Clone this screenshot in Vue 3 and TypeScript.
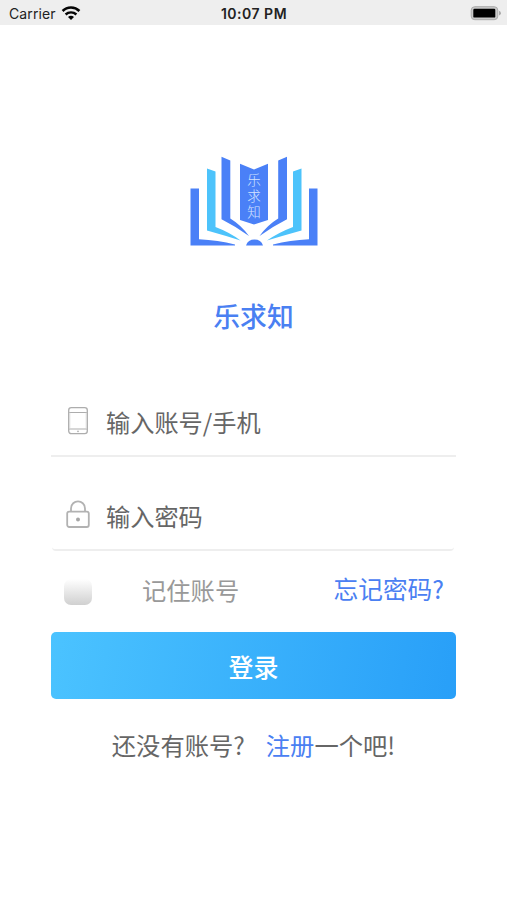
<script setup lang="ts">
import { ref } from 'vue'

const account = ref('')
const password = ref('')
const remember = ref(false)
</script>

<template>
  <div class="screen">
    <header class="status">
      <div class="carrier">
        <span>Carrier</span>
        <svg class="wifi" width="20" height="16" viewBox="0 0 20 16" fill="none">
          <path d="M1.600 5C6.200 .4 13.800 .4 18.400 5" stroke="#050505" stroke-width="2.600" />
          <path d="M4.600 8.500C7.600 5.700 12.400 5.700 15.400 8.500" stroke="#050505" stroke-width="2.400" />
          <path d="M7 10.900C8.800 9.400 11.200 9.400 13 10.900L10 13.900Z" fill="#050505" />
        </svg>
      </div>
      <span class="time">10:07 PM</span>
      <svg class="battery" width="32" height="16" viewBox="0 0 32 16">
        <rect x="1.200" y=".7" width="26.600" height="13" rx="3.600" fill="#c9c9c9" stroke="#aaa" stroke-width="1" />
        <rect x="3.300" y="2.800" width="22" height="8.800" rx="1.200" fill="#000" />
        <path d="M29 4.800Q31 5.700 31 7.200Q31 8.700 29 9.600Z" fill="#aaa" />
      </svg>
    </header>

    <main class="content">
      <svg class="logo" width="130" height="92" viewBox="0 0 130 92">
        <g fill="#4a80f7">
          <path d="M1.500 32.500H10V83.200Q29 84 46 88.500V89.500H1.500Z" />
          <path d="M128.500 32.500H120V83.200Q101 84 84 88.500V89.500H128.500Z" />
          <path d="M32.500 .8L41.300 4.500V62.500Q52 69 60 80Q47 70.500 32.500 63.200Z" />
          <path d="M98 .8L89.200 4.500V62.500Q78.500 69 70.500 80Q83.500 70.500 98 63.200Z" />
          <path d="M51 7.800L65 13.500L79 7.800V64L65 68.500L51 64Z" />
          <path d="M57 89.500Q59 83.600 65.500 83.600T74 89.500Z" />
        </g>
        <g fill="#4dc3fb">
          <path d="M18 12.500L26.500 15.500V71Q41 76.500 51.500 84.500Q36 79.500 18 74.500Z" />
          <path d="M112.500 12.500L104 15.500V71Q89.500 76.500 78 84.500Q94.500 79.500 112.500 74.500Z" />
        </g>
        <text x="65" y="16.700" class="logo-text">乐求知</text>
      </svg>

      <h1 class="title">乐求知</h1>

      <form class="form" @submit.prevent>
        <label class="field">
          <svg class="icon" width="28" height="32" viewBox="0 0 28 32" fill="none" stroke="#adadad" stroke-width="1.300">
            <rect x="4.700" y="2.700" width="18.600" height="26" rx="2.600" />
            <path d="M5 7.500H23M5 24H23" stroke-width="1" />
            <path d="M5.800 7.500V24M22.200 7.500V24" stroke="#d8d8d8" stroke-width=".8" />
            <circle cx="14" cy="26.400" r=".8" fill="#aaa" stroke="none" />
          </svg>
          <input v-model="account" type="text" placeholder="输入账号/手机" />
        </label>
        <label class="field password">
          <svg class="icon" width="28" height="32" viewBox="0 0 28 32" fill="none" stroke="#b2b2b2" stroke-width="1.800">
            <rect x="3.200" y="12.600" width="21.600" height="15.400" rx="2" />
            <path d="M7 12.500V9.500C7 .1 21 .1 21 9.500V12.500" />
            <circle cx="14" cy="20.500" r="2" fill="#a6a6a6" stroke="none" />
          </svg>
          <input v-model="password" type="password" placeholder="输入密码" />
        </label>

        <div class="options">
          <label class="remember">
            <input v-model="remember" class="check" type="checkbox" />
            <span class="remember-text">记住账号</span>
          </label>
          <a class="forgot">忘记密码?</a>
        </div>

        <button class="submit" type="submit">登录</button>
      </form>

      <p class="register"><span>还没有账号?</span><span class="invite"><a>注册</a>一个吧!</span></p>
    </main>
  </div>
</template>

<style>
body {
  background: #fff;
}
</style>

<style scoped>
.screen {
  height: 900px;
  overflow: hidden;
  background: #fff;
  color: #666;
  font-family: "Noto Sans CJK SC", sans-serif;
}
.status {
  display: grid;
  grid-template-columns: 1fr auto 1fr;
  align-items: center;
  box-sizing: border-box;
  height: 25px;
  padding: 2px 5px 0 9px;
  background: #eee;
  color: #222;
  font: 14px/20px Inter, sans-serif;
}
.carrier {
  display: flex;
  align-items: center;
  gap: 5px;
  letter-spacing: .1px;
}
.time {
  margin-right: 3px;
  font-weight: 600;
  letter-spacing: .5px;
}
.battery {
  justify-self: end;
}
.content {
  display: flex;
  flex-direction: column;
  align-items: center;
  padding: 131px 51px 0;
}
.logo-text {
  fill: #d5e4ff;
  font: 300 13.500px "Noto Sans CJK SC", sans-serif;
  letter-spacing: 2.500px;
  writing-mode: vertical-rl;
}
.title {
  margin: 48px 0 0;
  color: #4a80f2;
  font: 500 26.800px/40px "Noto Sans CJK SC", sans-serif;
}
.form {
  width: 100%;
  margin-top: 53px;
}
.field {
  display: flex;
  align-items: center;
  box-sizing: border-box;
  height: 68px;
  padding: 0 0 0 13px;
  border-bottom: 2px solid #eee;
}
.field .icon {
  margin-bottom: 2px;
}
.field input {
  min-width: 0;
  flex: 1;
  margin-left: 14px;
  padding: 0;
  border: 0;
  outline: 0;
  background: transparent;
  color: #666;
  font: 24.200px/36px "Noto Sans CJK SC", sans-serif;
}
.field input::placeholder {
  color: #666;
  opacity: 1;
}
.password {
  margin: 26px 2px 0 1px;
  padding-left: 12px;
  border-radius: 0 0 4px 4px;
}
.options {
  display: flex;
  align-items: center;
  justify-content: space-between;
  height: 81px;
  padding: 0 12px 0 13px;
  font-size: 24.300px;
  line-height: 36px;
}
.remember {
  display: flex;
  align-items: center;
  gap: 50px;
  color: #999;
}
.remember-text {
  margin-bottom: 4px;
}
.check {
  appearance: none;
  width: 28px;
  height: 26px;
  margin: 0;
  border-radius: 7px;
  background: linear-gradient(#fff, #d0d0d0);
}
.forgot {
  margin-bottom: 8px;
  color: #4a80f2;
  font-size: 24.700px;
}
.submit {
  display: block;
  width: 100%;
  height: 67px;
  padding: 0;
  border: 0;
  border-radius: 5px;
  background: linear-gradient(100deg, #4bc3ff, #289ff8);
  color: #fff;
  font: 500 25px/36px "Noto Sans CJK SC", sans-serif;
}
.register {
  display: flex;
  gap: 21px;
  margin: 28px 0 0;
  font-size: 24.300px;
  line-height: 36px;
  white-space: nowrap;
}
.register a {
  color: #4a80f2;
}
</style>
